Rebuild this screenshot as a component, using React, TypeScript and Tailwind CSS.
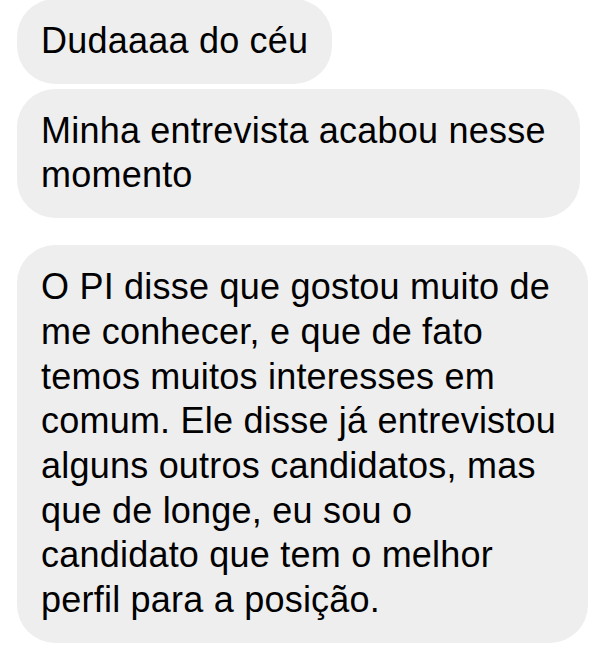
import React from 'react'

type Bubble = {
    lines: string[]
    width: string
    gap: string
}

const bubbles: Bubble[] = [
    { lines: ['Dudaaaa do céu'], width: 'w-[315px]', gap: '-mt-px' },
    {
        lines: ['Minha entrevista acabou nesse', 'momento'],
        width: 'w-[563px]',
        gap: 'mt-[5px]',
    },
    {
        lines: [
            'O PI disse que gostou muito de',
            'me conhecer, e que de fato',
            'temos muitos interesses em',
            'comum. Ele disse já entrevistou',
            'alguns outros candidatos, mas',
            'que de longe, eu sou o',
            'candidato que tem o melhor',
            'perfil para a posição.',
        ],
        width: 'w-[571px]',
        gap: 'mt-[27px]',
    },
]

const App: React.FC = () => {
    return (
        <div className="h-[655px] w-[600px] overflow-hidden bg-white font-['Liberation_Sans',Arial,sans-serif]">
            <div className="flex flex-col items-start pl-[17px]">
                {bubbles.map((b, i) => (
                    <div
                        key={i}
                        className={`${b.gap} ${b.width} rounded-[38px] bg-[#eeeeee] py-5 pl-6 pr-8 text-[36px] leading-[44.7px] tracking-[0.22px] text-black`}
                    >
                        {b.lines.map((line, j) => (
                            <div key={j} className="whitespace-nowrap">
                                {line}
                            </div>
                        ))}
                    </div>
                ))}
            </div>
        </div>
    )
}

export default App
